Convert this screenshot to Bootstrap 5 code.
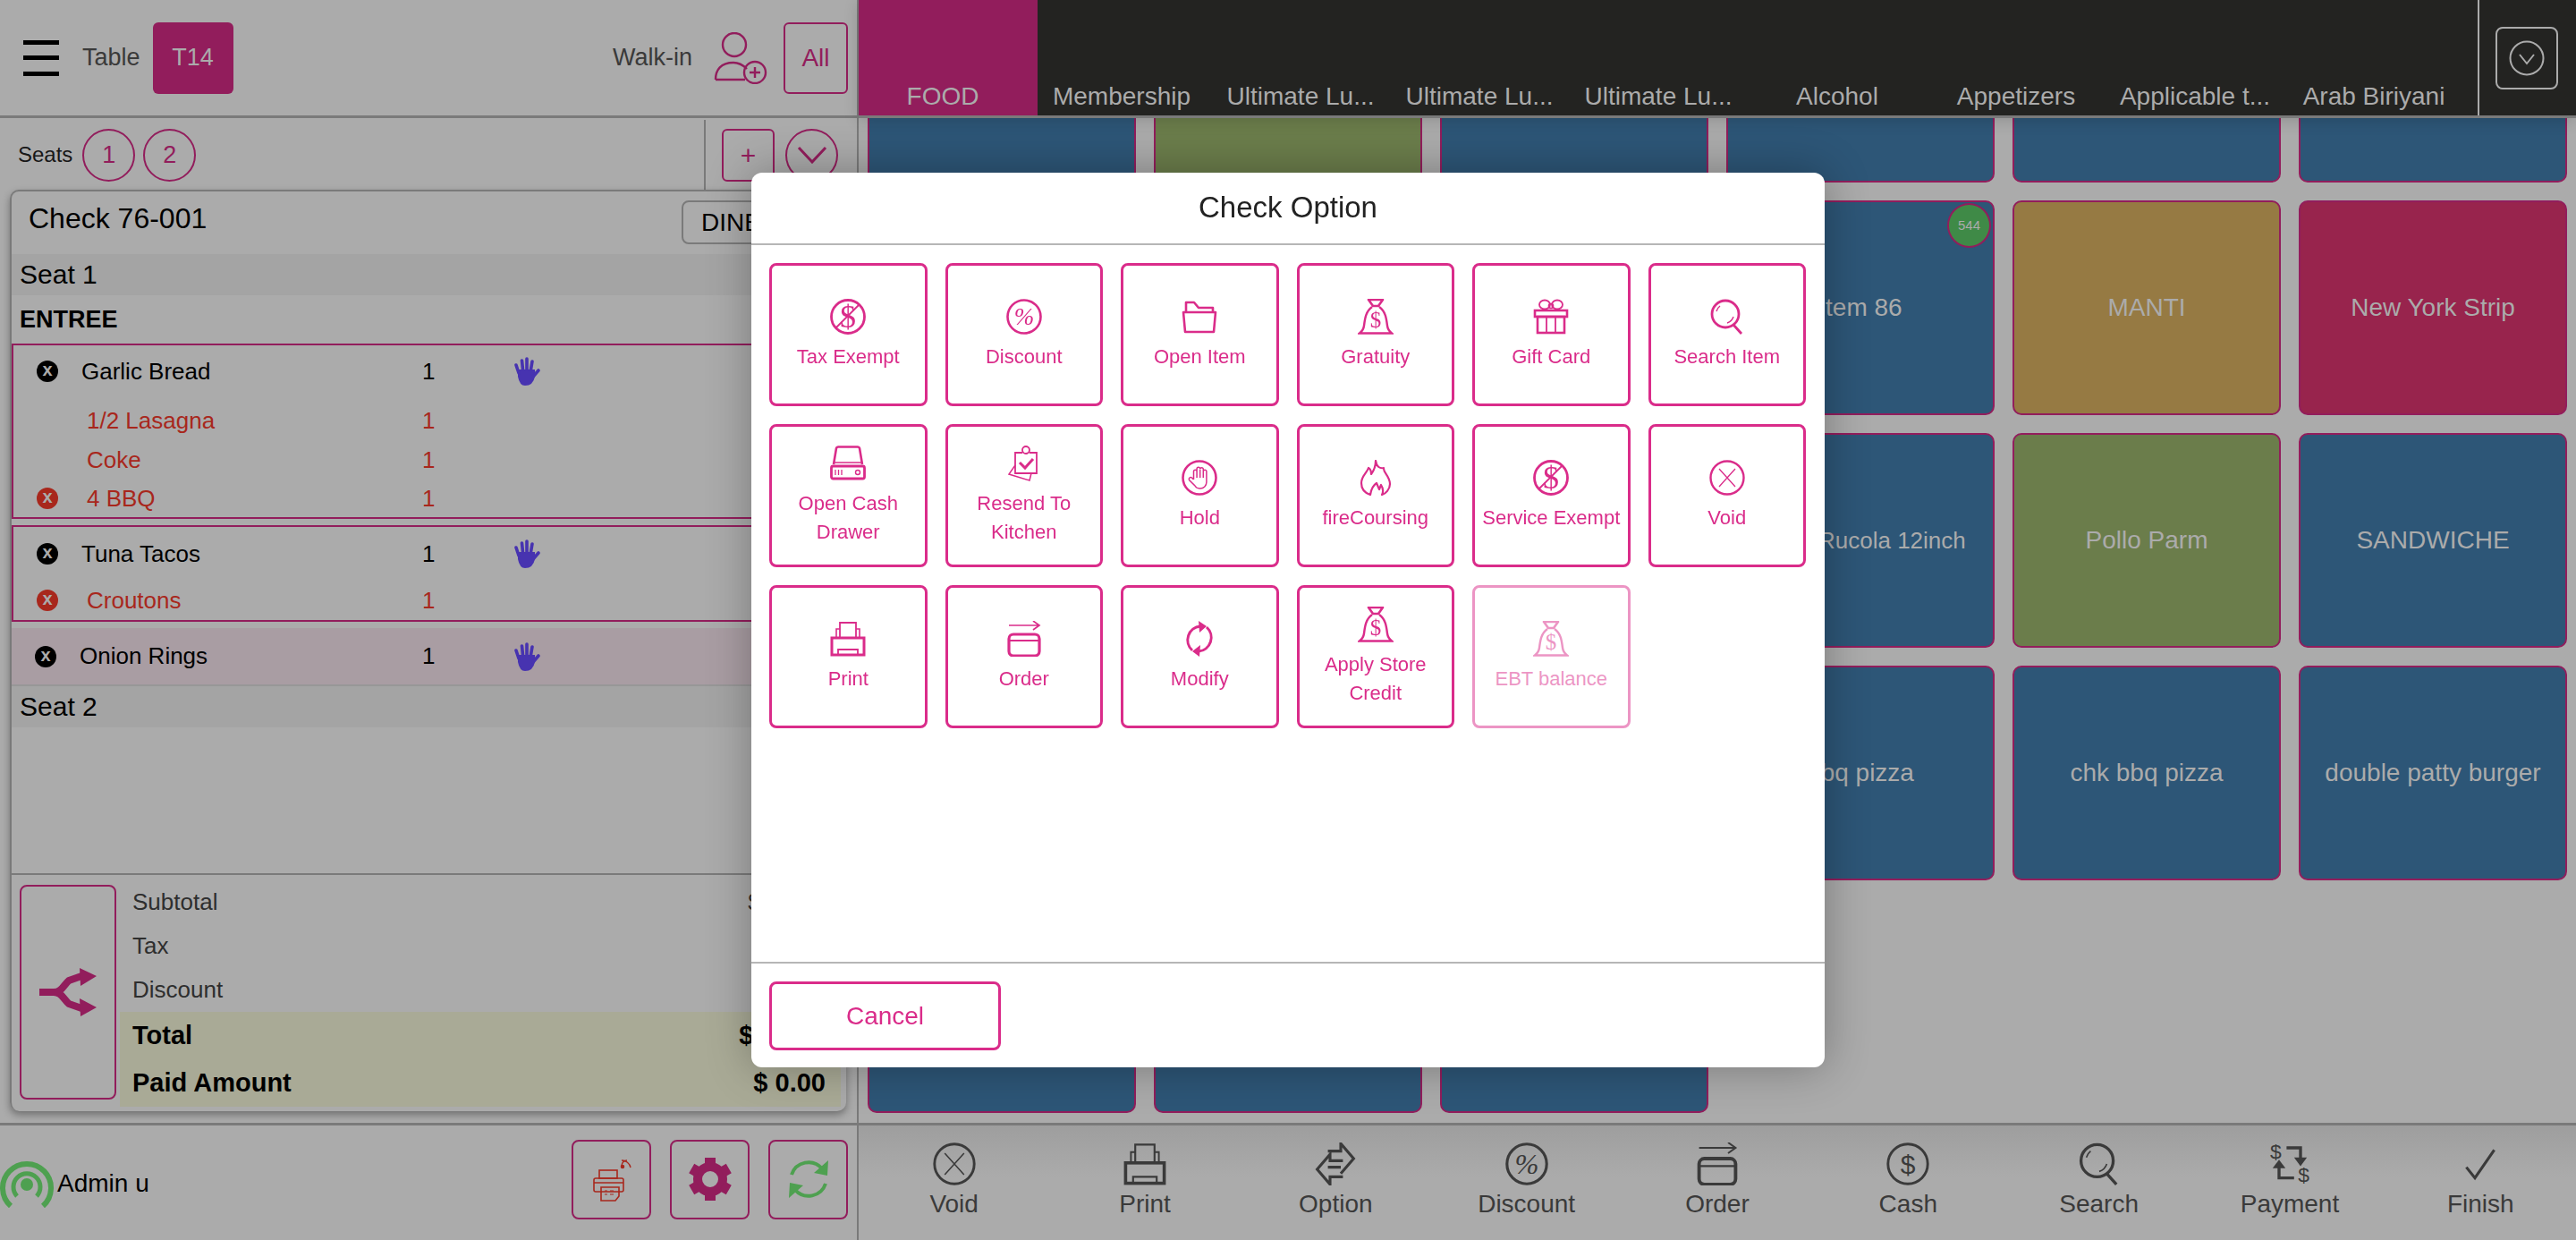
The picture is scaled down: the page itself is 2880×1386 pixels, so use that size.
<!DOCTYPE html>
<html lang="en">
<head>
<meta charset="UTF-8" />
<meta name="viewport" content="width=device-width, initial-scale=1.0" />
<title>Check Option</title>
<link href="https://cdn.jsdelivr.net/npm/bootstrap@5.3.3/dist/css/bootstrap.min.css" rel="stylesheet" />
<style>
	/* page colours are the dimmed ones, the dialog sits on top at full brightness */
	:root { --pink: #da2c8a; --dim-pink: #921d5c; --dim-line: #7a7a7a; --dim-bg: #ababab; --dim-red: #a8271c; --dim-green: #4ea050; --dim-text: #3a3a3a; }
	html, body { height: 100%; }
	body { font-family: "Liberation Sans", Arial, sans-serif; background: var(--dim-bg); color: #000; overflow: hidden; }
	.app-wrap { height: 1386px; width: 2880px; }
	.pane-left { width: 960px; flex: none; border-right: 2px solid var(--dim-line); }
	.pane-right { width: 1920px; flex: none; }

	/* left top */
	.top-left { height: 132px; border-bottom: 3px solid var(--dim-line); padding: 25px 10px 25px 26px; }
	.burger { width: 40px; height: 40px; }
	.burger i { display: block; height: 5px; background: #000; }
	.lbl-dim { font-size: 27px; color: var(--dim-text); }
	.lbl-table { margin-left: 26px; }
	.table-pill { width: 90px; height: 80px; background: var(--dim-pink); color: var(--dim-bg); border-radius: 6px; font-size: 27px; margin-left: 14px; }
	.all-btn { width: 72px; height: 80px; border: 2px solid var(--dim-pink); border-radius: 6px; color: var(--dim-pink); font-size: 28px; margin-left: 18px; }
	.seat-row { height: 80px; padding-top: 2px; }
	.seat-row .seats-lbl { font-size: 24px; color: #171717; margin: 0 11px 0 20px; }
	.seat-dot { width: 59px; height: 59px; border: 2px solid var(--dim-pink); color: var(--dim-pink); font-size: 27px; margin-right: 9px; }
	.seat-tools { width: 170px; height: 78px; border-left: 2px solid var(--dim-line); padding-left: 18px; margin-right: 1px; }
	.seat-tool { width: 59px; height: 59px; border: 2px solid var(--dim-pink); color: var(--dim-pink); margin-right: 12px; font-size: 30px; }

	/* check card */
	.check-box { margin: 0 12px 0 11px; height: 1030px; border: 2px solid var(--dim-line); border-width: 2px 0 0 2px; border-radius: 10px; box-shadow: 0 4px 8px rgba(0,0,0,.35); overflow: hidden; }
	.check-head { height: 70px; padding: 10px 32px 0 19px; }
	.check-head .ttl { font-size: 32px; line-height: 40px; }
	.dine-btn { width: 152px; height: 49px; border: 2px solid var(--dim-line); border-radius: 8px; font-size: 28px; color: #000; padding-left: 20px; }
	.seat-band { height: 46px; background: #a4a4a4; font-size: 30px; line-height: 46px; padding-left: 9px; }
	.course { height: 54px; font-size: 27px; font-weight: 700; line-height: 54px; padding-left: 9px; }
	.item-set { border: 2px solid var(--dim-pink); border-right: 0; }
	.item-row { height: 44px; font-size: 26px; }
	.item-row.main { height: 60px; }
	.item-row.first-row { height: 62px; padding-bottom: 4px; }
	.item-row.last-row { height: 42px; }
	.x-cell { width: 76px; flex: none; padding-left: 26px; }
	.x-dot { width: 24px; height: 24px; background: #000; color: var(--dim-bg); font-size: 20px; font-weight: 700; line-height: 21px; text-align: center; }
	.x-dot.red { background: var(--dim-red); }
	.name-cell { width: 381px; flex: none; }
	.name-cell.sub { padding-left: 6px; color: var(--dim-red); }
	.qty-cell { width: 102px; flex: none; }
	.qty-cell.red { color: var(--dim-red); }
	.hand-ic { width: 30px; height: 32px; color: #4733b0; }
	.row-onion { height: 63px; background: #a99da3; border-bottom: 2px solid #979797; box-sizing: content-box; font-size: 26px; margin-top: 7px; }
	.row-onion .name-cell { width: 383px; }
	.set-two { margin-top: 7px; }
	.totals-wrap { height: 266px; border-top: 2px solid var(--dim-line); padding: 11px 6px 6px 9px; }
	.split-btn { width: 108px; height: 240px; flex: none; border: 2px solid var(--dim-pink); border-radius: 8px; color: var(--dim-pink); }
	.split-btn svg { width: 64px; height: 54px; }
	.tot-col { padding-left: 4px; margin-top: -5px; }
	.tot-line { height: 49px; font-size: 26px; color: #2e2e2e; padding: 0 17px 0 14px; flex: none; }
	.tot-line.hi { height: 53px; font-size: 29px; font-weight: 700; color: #000; background: #a9aa96; }

	/* left bottom */
	.bot-left { height: 131px; margin-top: 13px; border-top: 3px solid var(--dim-line); padding: 0 10px 8px 0; }
	.signal { width: 60px; height: 56px; color: var(--dim-green); margin-top: 8px; }
	.admin-lbl { font-size: 28px; margin: 10px 0 0 4px; }
	.tool-btn { width: 89px; height: 89px; border: 2px solid var(--dim-pink); border-radius: 8px; margin-left: 21px; }
	.tool-btn svg { width: 50px; height: 50px; }

	/* categories */
	.cat-bar { height: 132px; background: #232321; border-bottom: 3px solid var(--dim-line); position: relative; z-index: 2; box-shadow: 0 3px 16px rgba(0,0,0,.15); }
	.cat-tabs { width: 1810px; flex: none; overflow: hidden; }
	.cat-tab { width: 200px; flex: none; color: var(--dim-bg); font-size: 28px; line-height: 32px; padding: 0 12px 5px 0; text-align: center; white-space: nowrap; }
	.cat-tab.on { background: var(--dim-pink); }
	.cat-more { border-left: 2px solid var(--dim-bg); padding-left: 18px; }
	.more-btn { width: 70px; height: 70px; border: 2px solid var(--dim-bg); border-radius: 8px; }

	/* products */
	.prod-area { height: 1123px; overflow: hidden; padding: 0 10px; }
	.prod-grid { display: grid; grid-template-columns: repeat(6, 300px); grid-auto-rows: 240px; gap: 20px; margin-top: -168px; }
	.prod-tile { border: 2px solid var(--dim-pink); border-radius: 10px; color: var(--dim-bg); font-size: 28px; position: relative; }
	.tile-sm { font-size: 26px; }
	.t-blue { background: #2d5677; }
	.t-olive { background: #6b7d4b; }
	.t-gold { background: #967a43; }
	.t-red { background: #98244d; }
	.stock-dot { position: absolute; top: 1px; right: 2px; width: 49px; height: 50px; background: #3f8a47; border: 2px solid var(--dim-pink); font-size: 15px; }

	/* action bar */
	.act-bar { height: 131px; border-top: 3px solid var(--dim-line); background: linear-gradient(#9e9e9e, var(--dim-bg) 45%); }
	.act-item { width: 213.33px; flex: none; color: var(--dim-text); font-size: 28px; padding-top: 19px; }
	.act-item svg { width: 48px; height: 48px; display: block; }
	.act-item span { line-height: 42px; }

	/* modal */
	.opt-dialog.modal-dialog { max-width: 1200px; margin: 193px auto 0; }
	.opt-content { height: 1000px; border: 0; border-radius: 12px; box-shadow: 0 0 50px rgba(0,0,0,.3); }
	.opt-head { height: 81px; padding: 0; border-bottom: 2px solid #b6b6b6; }
	.opt-head h5 { font-size: 33px; font-weight: 400; color: #222; line-height: 1; margin-top: -2px; }
	.opt-body { padding: 20px; }
	.opt-grid { display: grid; grid-template-columns: repeat(6, 176.5px); grid-auto-rows: 160px; gap: 20px; }
	.opt-btn { border: 3px solid var(--pink); border-radius: 8px; color: var(--pink); background: #fff; font-size: 22px; line-height: 32px; padding: 0; --bs-btn-hover-color: var(--pink); }
	.opt-btn svg { width: 40px; height: 40px; margin-bottom: 9px; flex: none; }
	.opt-btn.is-off { opacity: .5; }
	.opt-foot { height: 118px; padding: 20px; border-top: 2px solid #b6b6b6; --bs-modal-footer-gap: 0; align-items: flex-start; }
	.cancel-btn { width: 259px; height: 77px; border: 3px solid var(--pink); border-radius: 8px; color: var(--pink); background: #fff; font-size: 28px; }
</style>
</head>
<body>
<svg width="0" height="0" class="d-block" aria-hidden="true">
	<defs>
		<symbol id="ic-void" viewBox="0 0 40 40"><circle cx="20" cy="20" r="18.5" fill="none" stroke="currentColor" stroke-width="2.4"/><path d="M11 10 29 30M29 10 11 30" stroke="currentColor" stroke-width="1.3"/></symbol>
		<symbol id="ic-exempt" viewBox="0 0 40 40"><circle cx="20" cy="20" r="18.5" fill="none" stroke="currentColor" stroke-width="2.8"/><text x="20" y="32" font-size="36" text-anchor="middle" fill="currentColor" font-family="Liberation Serif">$</text><path d="M7 32 33 6" stroke="currentColor" stroke-width="1.8"/></symbol>
		<symbol id="ic-percent" viewBox="0 0 40 40"><circle cx="20" cy="20" r="18.5" fill="none" stroke="currentColor" stroke-width="2.6"/><text x="20" y="29" font-size="27" font-style="italic" text-anchor="middle" fill="currentColor" font-family="Liberation Serif">%</text></symbol>
		<symbol id="ic-folder" viewBox="0 0 40 40"><path d="M2 15H38L36 37H4ZM5 15V4H14L19 10H35V15" fill="none" stroke="currentColor" stroke-width="2.6" stroke-linejoin="round"/></symbol>
		<symbol id="ic-bag" viewBox="0 0 40 40"><path d="M12 1H28L23 8H17Z" fill="none" stroke="currentColor" stroke-width="2.6" stroke-linejoin="round"/><path d="M16 9C9 14 8 22 7 30 6.5 34 4 37 2 38.500H38C36 37 33.500 34 33 30 32 22 31 14 24 9" fill="none" stroke="currentColor" stroke-width="2.4"/><text x="20" y="32" font-size="25" text-anchor="middle" fill="currentColor" font-family="Liberation Serif">$</text></symbol>
		<symbol id="ic-gift" viewBox="0 0 40 40"><rect x="2" y="13" width="36" height="7" fill="none" stroke="currentColor" stroke-width="2.6"/><rect x="5" y="20" width="30" height="18" fill="none" stroke="currentColor" stroke-width="2.6"/><path d="M15 20V38M25 20V38" stroke="currentColor" stroke-width="1.8"/><ellipse cx="13" cy="6.500" rx="6" ry="5" fill="none" stroke="currentColor" stroke-width="1.8"/><ellipse cx="27" cy="6.500" rx="6" ry="5" fill="none" stroke="currentColor" stroke-width="1.8"/><circle cx="20" cy="8" r="2.500" fill="none" stroke="currentColor" stroke-width="1.6"/></symbol>
		<symbol id="ic-search" viewBox="0 0 40 40"><circle cx="18" cy="17" r="15" fill="none" stroke="currentColor" stroke-width="2.8"/><path d="M27 29 36 39" stroke="currentColor" stroke-width="2.8"/><path d="M8 14A11 11 0 0 1 12 8M27 20A11 11 0 0 1 20 27" fill="none" stroke="currentColor" stroke-width="1.4"/></symbol>
		<symbol id="ic-drawer" viewBox="0 0 40 40"><path d="M4 21 7 3Q7.300 1.500 9 1.500H31Q32.700 1.500 33 3L36 21" fill="none" stroke="currentColor" stroke-width="2.600"/><path d="M5 19H35" stroke="currentColor" stroke-width="1.500"/><rect x="1.500" y="23" width="37" height="14" rx="2" fill="none" stroke="currentColor" stroke-width="2.800"/><path d="M6 27V33M9.500 27V33M13 27V33" stroke="currentColor" stroke-width="1.300"/><circle cx="31" cy="30" r="2.500" fill="none" stroke="currentColor" stroke-width="1.400"/></symbol>
		<symbol id="ic-resend" viewBox="0 0 40 40"><circle cx="22" cy="5" r="4" fill="none" stroke="currentColor" stroke-width="1.800"/><path d="M18 8H10V31H34V8H26" fill="none" stroke="currentColor" stroke-width="1.800"/><path d="M15 19 21 25 30 15" fill="none" stroke="currentColor" stroke-width="3"/><path d="M10 22 3 32 26 39 28 31" fill="none" stroke="currentColor" stroke-width="1.500"/></symbol>
		<symbol id="ic-hold" viewBox="0 0 40 40"><circle cx="20" cy="20" r="18.500" fill="none" stroke="currentColor" stroke-width="2.600"/><path d="M13.500 22V13a1.800 1.800 0 0 1 3.600 0V10a1.800 1.800 0 0 1 3.600 0V10.500a1.800 1.800 0 0 1 3.600 0V13a1.800 1.800 0 0 1 3.600 0V25a7 7 0 0 1-7 7H20a6 6 0 0 1-5-3L8.500 22.500a2 2 0 0 1 3-2.500L13.500 22M17.100 12V20M20.700 11V20M24.300 12V20" fill="none" stroke="currentColor" stroke-width="1.500"/></symbol>
		<symbol id="ic-fire" viewBox="0 0 40 40"><path d="M20 1C21 8 25 10 29 9 28 14 36 18 36 27 36 33 31 38 27 39 29 35 28 31 26 28L24 33 21 26C18 28 15 32 14 39 8 37 4 33 4 26 4 18 10 15 12 9 14 10 15 13 15 16 18 12 20 7 20 1Z" fill="none" stroke="currentColor" stroke-width="2.200" stroke-linejoin="round"/></symbol>
		<symbol id="ic-print" viewBox="0 0 40 40"><path d="M11 18V2H29V18" fill="none" stroke="currentColor" stroke-width="1.800"/><path d="M7 18V9H11M29 9H33V18" fill="none" stroke="currentColor" stroke-width="1.600"/><rect x="2" y="19" width="36" height="19" fill="none" stroke="currentColor" stroke-width="3"/><path d="M9 38V32H31V38" fill="none" stroke="currentColor" stroke-width="1.800"/></symbol>
		<symbol id="ic-order" viewBox="0 0 40 40"><path d="M3 5H36M30 0 37 5 30 10" fill="none" stroke="currentColor" stroke-width="1.700"/><rect x="3" y="15" width="34" height="24" rx="5" fill="none" stroke="currentColor" stroke-width="3.200"/><path d="M3 22H37" stroke="currentColor" stroke-width="2"/></symbol>
		<symbol id="ic-modify" viewBox="0 0 40 40"><path d="M12 33A15.500 15.500 0 0 1 21 6M28 7A15.500 15.500 0 0 1 19 34" fill="none" stroke="currentColor" stroke-width="3"/><path d="M19 0 28 6 20 13ZM21 27 12 34 20 40Z" fill="currentColor"/></symbol>
		<symbol id="ic-swap" viewBox="0 0 40 40"><path d="M13 8H25V1L37 15 25 29M25 23H13" fill="none" stroke="currentColor" stroke-width="2.600"/><path d="M27 17H15V11L3 25 15 39V32H27" fill="none" stroke="currentColor" stroke-width="2.600"/></symbol>
		<symbol id="ic-cash" viewBox="0 0 40 40"><circle cx="20" cy="20" r="18.500" fill="none" stroke="currentColor" stroke-width="2.400"/><text x="20" y="29" font-size="25" text-anchor="middle" fill="currentColor" font-family="Liberation Sans">$</text></symbol>
		<symbol id="ic-pay" viewBox="0 0 40 40"><text x="7" y="15" font-size="19" text-anchor="middle" fill="currentColor" font-family="Liberation Sans">$</text><text x="33" y="37" font-size="19" text-anchor="middle" fill="currentColor" font-family="Liberation Sans">$</text><path d="M17 5H30V16" fill="none" stroke="currentColor" stroke-width="2.800"/><path d="M24 14H36L30 22Z" fill="currentColor"/><path d="M24 33H10V22" fill="none" stroke="currentColor" stroke-width="2.800"/><path d="M4 24H16L10 16Z" fill="currentColor"/></symbol>
		<symbol id="ic-check" viewBox="0 0 40 40"><path d="M7 23 15 33 33 7" fill="none" stroke="currentColor" stroke-width="2.600"/></symbol>
		<symbol id="ic-hand" viewBox="0 0 30 32"><path d="M5 14 24 14 24 22Q22 32 13 32 7 32 5 22Z" fill="currentColor"/><path d="M6 18 3 9M10.500 14 9.500 4M15 14V2M19.500 14 21 5M22 22 28 15" fill="none" stroke="currentColor" stroke-width="3.600" stroke-linecap="round"/></symbol>
	</defs>
</svg>

<div class="app-wrap d-flex">
	<!-- Left pane -->
	<div class="pane-left d-flex flex-column">
		<div class="top-left d-flex align-items-center">
			<div class="burger d-flex flex-column justify-content-between"><i></i><i></i><i></i></div>
			<span class="lbl-dim lbl-table">Table</span>
			<div class="table-pill d-flex align-items-center justify-content-center">T14</div>
			<span class="lbl-dim ms-auto">Walk-in</span>
			<svg class="ms-4" width="60" height="58" viewBox="0 0 60 58" fill="none" stroke="#921d5c" stroke-width="2.400"><ellipse cx="23" cy="14" rx="13" ry="13"/><path d="M2 53C2 42 8 34 22 34 30 34 34 38 37 41M2 53H35"/><circle cx="46" cy="45" r="12"/><path d="M46 39V51M40 45H52"/></svg>
			<div class="all-btn d-flex align-items-center justify-content-center">All</div>
		</div>

		<div class="seat-row d-flex align-items-center">
			<span class="seats-lbl">Seats</span>
			<div class="seat-dot rounded-circle d-flex align-items-center justify-content-center">1</div>
			<div class="seat-dot rounded-circle d-flex align-items-center justify-content-center">2</div>
			<div class="seat-tools d-flex align-items-center ms-auto">
				<div class="seat-tool rounded-2 d-flex align-items-center justify-content-center">+</div>
				<div class="seat-tool rounded-circle d-flex align-items-center justify-content-center">
					<svg width="34" height="20" viewBox="0 0 34 20" fill="none" stroke="#921d5c" stroke-width="3"><path d="M2 2 17 18 32 2"/></svg>
				</div>
			</div>
		</div>

		<div class="check-box d-flex flex-column">
			<div class="check-head d-flex justify-content-between align-items-start">
				<span class="ttl">Check 76-001</span>
				<div class="dine-btn d-flex align-items-center">DINE IN</div>
			</div>
			<div class="seat-band">Seat 1</div>
			<div class="course">ENTREE</div>

			<div class="item-set">
				<div class="item-row first-row d-flex align-items-center">
					<div class="x-cell"><div class="x-dot rounded-circle">x</div></div>
					<div class="name-cell">Garlic Bread</div>
					<div class="qty-cell">1</div>
					<svg class="hand-ic"><use href="#ic-hand"/></svg>
				</div>
				<div class="item-row d-flex align-items-center">
					<div class="x-cell"></div>
					<div class="name-cell sub">1/2 Lasagna</div>
					<div class="qty-cell red">1</div>
				</div>
				<div class="item-row d-flex align-items-center">
					<div class="x-cell"></div>
					<div class="name-cell sub">Coke</div>
					<div class="qty-cell red">1</div>
				</div>
				<div class="item-row last-row d-flex align-items-center">
					<div class="x-cell"><div class="x-dot red rounded-circle">x</div></div>
					<div class="name-cell sub">4 BBQ</div>
					<div class="qty-cell red">1</div>
				</div>
			</div>

			<div class="item-set set-two">
				<div class="item-row main d-flex align-items-center">
					<div class="x-cell"><div class="x-dot rounded-circle">x</div></div>
					<div class="name-cell">Tuna Tacos</div>
					<div class="qty-cell">1</div>
					<svg class="hand-ic"><use href="#ic-hand"/></svg>
				</div>
				<div class="item-row d-flex align-items-center">
					<div class="x-cell"><div class="x-dot red rounded-circle">x</div></div>
					<div class="name-cell sub">Croutons</div>
					<div class="qty-cell red">1</div>
				</div>
			</div>

			<div class="row-onion d-flex align-items-center">
				<div class="x-cell"><div class="x-dot rounded-circle">x</div></div>
				<div class="name-cell">Onion Rings</div>
				<div class="qty-cell">1</div>
				<svg class="hand-ic"><use href="#ic-hand"/></svg>
			</div>
			<div class="seat-band">Seat 2</div>

			<div class="flex-grow-1"></div>

			<div class="totals-wrap d-flex">
				<div class="split-btn d-flex align-items-center justify-content-center">
					<svg viewBox="0 0 64 54" fill="none"><path d="M0 27H16C25 27 27 19 33 14L50 8M16 27C25 27 27 35 33 40L50 46" stroke="currentColor" stroke-width="8"/><path d="M45 0 64 9 46 20ZM45 34 64 44 46 54Z" fill="currentColor"/></svg>
				</div>
				<div class="tot-col flex-grow-1 d-flex flex-column">
					<div class="tot-line d-flex align-items-center justify-content-between"><span>Subtotal</span><span>$ 15.00</span></div>
					<div class="tot-line d-flex align-items-center justify-content-between"><span>Tax</span><span>$ 0.00</span></div>
					<div class="tot-line d-flex align-items-center justify-content-between"><span>Discount</span><span>$ 0.00</span></div>
					<div class="tot-line hi d-flex align-items-center justify-content-between"><span>Total</span><span>$ 15.00</span></div>
					<div class="tot-line hi d-flex align-items-center justify-content-between"><span>Paid Amount</span><span>$ 0.00</span></div>
				</div>
			</div>
		</div>

		<div class="bot-left d-flex align-items-center">
			<svg class="signal" viewBox="0 0 60 56" fill="none" stroke="currentColor"><path d="M12 54A27 27 0 1 1 48 54" stroke-width="6"/><path d="M19 43A15 15 0 1 1 41 43" stroke-width="5"/><circle cx="30" cy="30" r="7" fill="currentColor" stroke="none"/></svg>
			<span class="admin-lbl">Admin u</span>
			<div class="tool-btn ms-auto d-flex align-items-center justify-content-center">
				<svg viewBox="0 0 50 50" fill="none" stroke="#a8271c" stroke-width="1.600"><path d="M36 10A6 6 0 0 1 42 4M36 4A10 10 0 0 1 46 12" stroke-width="1.400"/><circle cx="37" cy="11" r="1.500" fill="#a8271c"/><rect x="11" y="15" width="20" height="9"/><rect x="5" y="24" width="33" height="15" rx="2"/><path d="M5 29H38"/><path d="M13 34V49H29L33 44V34Z"/><path d="M17 38H20M23 38H27M17 42H20M23 42H27" stroke-width="1.200"/></svg>
			</div>
			<div class="tool-btn d-flex align-items-center justify-content-center">
				<svg viewBox="0 0 50 50" fill="#921d5c"><circle cx="25" cy="25" r="14" fill="none" stroke="#921d5c" stroke-width="10"/><rect x="19" y="1" width="12" height="9"/><rect x="19" y="40" width="12" height="9"/><rect x="19" y="1" width="12" height="9" transform="rotate(60 25 25)"/><rect x="19" y="40" width="12" height="9" transform="rotate(60 25 25)"/><rect x="19" y="1" width="12" height="9" transform="rotate(120 25 25)"/><rect x="19" y="40" width="12" height="9" transform="rotate(120 25 25)"/></svg>
			</div>
			<div class="tool-btn d-flex align-items-center justify-content-center">
				<svg viewBox="0 0 50 50" fill="none" stroke="#4ea050" stroke-width="4"><path d="M6 20A20 20 0 0 1 40 13M44 30A20 20 0 0 1 10 37"/><path d="M47 4 46 21 31 18ZM3 46 4 29 19 32Z" fill="#4ea050" stroke="none"/></svg>
			</div>
		</div>
	</div>

	<!-- Right pane -->
	<div class="pane-right d-flex flex-column">
		<div class="cat-bar d-flex">
			<div class="cat-tabs d-flex">
				<div class="cat-tab on d-flex align-items-end justify-content-center">FOOD</div>
				<div class="cat-tab d-flex align-items-end justify-content-center">Membership</div>
				<div class="cat-tab d-flex align-items-end justify-content-center">Ultimate Lu...</div>
				<div class="cat-tab d-flex align-items-end justify-content-center">Ultimate Lu...</div>
				<div class="cat-tab d-flex align-items-end justify-content-center">Ultimate Lu...</div>
				<div class="cat-tab d-flex align-items-end justify-content-center">Alcohol</div>
				<div class="cat-tab d-flex align-items-end justify-content-center">Appetizers</div>
				<div class="cat-tab d-flex align-items-end justify-content-center">Applicable t...</div>
				<div class="cat-tab d-flex align-items-end justify-content-center">Arab Biriyani</div>
			</div>
			<div class="cat-more d-flex align-items-center flex-grow-1">
				<div class="more-btn d-flex align-items-center justify-content-center">
					<svg width="40" height="40" viewBox="0 0 40 40" fill="none" stroke="#ababab" stroke-width="2"><circle cx="20" cy="20" r="18.500"/><path d="M12 16 20 26 28 16"/></svg>
				</div>
			</div>
		</div>

		<div class="prod-area">
			<div class="prod-grid" id="prodGrid"></div>
		</div>

		<div class="act-bar d-flex">
			<div class="act-item d-flex flex-column align-items-center"><svg><use href="#ic-void"/></svg><span>Void</span></div>
			<div class="act-item d-flex flex-column align-items-center"><svg><use href="#ic-print"/></svg><span>Print</span></div>
			<div class="act-item d-flex flex-column align-items-center"><svg><use href="#ic-swap"/></svg><span>Option</span></div>
			<div class="act-item d-flex flex-column align-items-center"><svg><use href="#ic-percent"/></svg><span>Discount</span></div>
			<div class="act-item d-flex flex-column align-items-center"><svg><use href="#ic-order"/></svg><span>Order</span></div>
			<div class="act-item d-flex flex-column align-items-center"><svg><use href="#ic-cash"/></svg><span>Cash</span></div>
			<div class="act-item d-flex flex-column align-items-center"><svg><use href="#ic-search"/></svg><span>Search</span></div>
			<div class="act-item d-flex flex-column align-items-center"><svg><use href="#ic-pay"/></svg><span>Payment</span></div>
			<div class="act-item d-flex flex-column align-items-center"><svg><use href="#ic-check"/></svg><span>Finish</span></div>
		</div>
	</div>
</div>

<!-- Check option dialog -->
<div class="modal d-block" tabindex="-1">
	<div class="modal-dialog opt-dialog">
		<div class="modal-content opt-content">
			<div class="modal-header opt-head justify-content-center">
				<h5 class="modal-title">Check Option</h5>
			</div>
			<div class="modal-body opt-body">
				<div class="opt-grid" id="optGrid"></div>
			</div>
			<div class="modal-footer opt-foot justify-content-start">
				<button type="button" class="btn cancel-btn m-0">Cancel</button>
			</div>
		</div>
	</div>
</div>

<script src="https://cdn.jsdelivr.net/npm/bootstrap@5.3.3/dist/js/bootstrap.bundle.min.js"></script>
<script>
	const tiles = [
		["t-blue", ""], ["t-olive", ""], ["t-blue", ""], ["t-blue", ""], ["t-blue", ""], ["t-blue", ""],
		["t-blue", ""], ["t-blue", ""], ["t-blue", ""], ["t-blue", "Item 86", "544"], ["t-gold", "MANTI"], ["t-red", "New York Strip"],
		["t-blue", ""], ["t-blue", ""], ["t-blue", ""], ["t-blue", '<span class="tile-sm">Pizza Rucola 12inch</span>'], ["t-olive", "Pollo Parm"], ["t-blue", "SANDWICHE"],
		["t-blue", ""], ["t-blue", ""], ["t-blue", ""], ["t-blue", "bbq pizza"], ["t-blue", "chk bbq pizza"], ["t-blue", "double patty burger"],
		["t-blue", ""], ["t-blue", ""], ["t-blue", ""]
	];
	document.getElementById("prodGrid").innerHTML = tiles.map(([cls, name, stock]) => `
		<div class="prod-tile ${cls} d-flex align-items-center justify-content-center">
			${name}
			${stock ? `<div class="stock-dot rounded-circle d-flex align-items-center justify-content-center">${stock}</div>` : ""}
		</div>`).join("");

	const options = [
		["exempt", "Tax Exempt"], ["percent", "Discount"], ["folder", "Open Item"], ["bag", "Gratuity"], ["gift", "Gift Card"], ["search", "Search Item"],
		["drawer", "Open Cash<br>Drawer"], ["resend", "Resend To<br>Kitchen"], ["hold", "Hold"], ["fire", "fireCoursing"], ["exempt", "Service Exempt"], ["void", "Void"],
		["print", "Print"], ["order", "Order"], ["modify", "Modify"], ["bag", "Apply Store<br>Credit"], ["bag", "EBT balance", true]
	];
	document.getElementById("optGrid").innerHTML = options.map(([icon, label, off]) => `
		<button type="button" class="btn opt-btn d-flex flex-column align-items-center justify-content-center${off ? " is-off" : ""}">
			<svg><use href="#ic-${icon}"/></svg>
			<span>${label}</span>
		</button>`).join("");
</script>
</body>
</html>
